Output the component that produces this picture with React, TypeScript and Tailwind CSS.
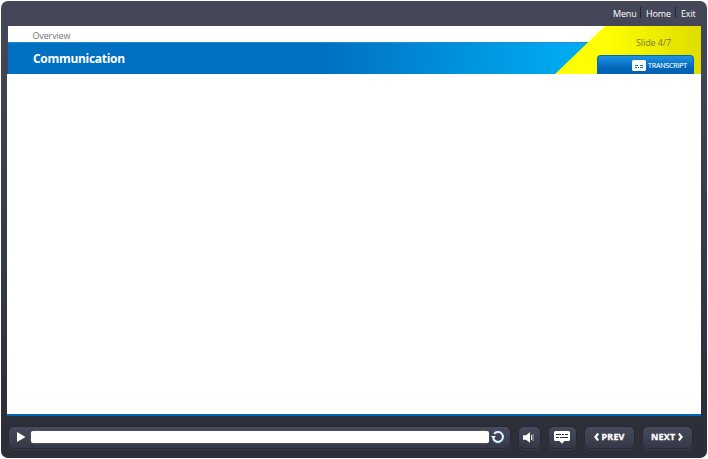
import React from 'react';

const pill =
  'flex items-center h-[21px] rounded-[5px] bg-linear-to-b from-[#484b5c] to-[#353846] ring-1 ring-[#272a34] shadow-[0_1px_1px_1px_#3d404c]';

function TopMenu() {
  return (
    <nav className="flex h-[25px] shrink-0 items-center justify-end pr-[11px] text-[9px] leading-[12px] tracking-[-0.15px] text-white">
      <a className="w-[22px] whitespace-nowrap">Menu</a>
      <span className="mx-[5px] mb-[3px] h-[11px] w-px bg-[#232630]" />
      <a className="w-[24px] whitespace-nowrap">Home</a>
      <span className="mx-[5px] mb-[3px] h-[11px] w-px bg-[#232630]" />
      <a className="w-[15px] whitespace-nowrap">Exit</a>
    </nav>
  );
}

function Header() {
  return (
    <header className="relative ml-[7px] mr-[6px] h-[48px] shrink-0 bg-white">
      <div className="h-[16px] pl-[24.5px] pt-[3px] text-[9px] leading-[13px] tracking-[-0.15px] text-[#777]">Overview</div>
      <div className="h-[32px] border-t border-[#268bd0] bg-linear-to-r from-[#0070c0] from-45% to-[#00aaf0] to-80% pl-[25px] text-[12px] font-bold leading-[31px] tracking-[-0.3px] text-white">
        Communication
      </div>
      <div className="absolute right-0 top-0 h-[48px] w-[146px] bg-linear-to-r from-[#ffff00] from-35% to-[#dfdc00] [clip-path:polygon(50px_0,100%_0,100%_100%,0_100%)]">
        <div className="pl-[81px] pt-[10px] text-[9px] leading-[13px] tracking-[-0.1px] text-[#777745]">Slide 4/7</div>
        <div className="ml-[42px] mt-[6px] flex h-[19px] w-[97px] items-center justify-end rounded-t-[4px] border border-b-0 border-[#006ba8] bg-linear-to-b from-[#1c92e8] to-[#0064b6] to-70% pr-[5px] pt-[2px] text-[7px] text-white">
          <svg width="14" height="11" viewBox="0 0 14 11" className="mr-[2px] mb-px">
            <rect width="14" height="11" rx="1.5" fill="white" />
            <path d="M3 5.5h3M8 5.5h3M3 7.5h2M6 7.5h1M8 7.5h3" stroke="#1672b8" strokeWidth="1" />
          </svg>
          <span className="w-[40px] whitespace-nowrap tracking-[-0.15px] [-webkit-text-stroke:0.1px_white]">TRANSCRIPT</span>
        </div>
      </div>
    </header>
  );
}

function Controls() {
  return (
    <footer className="flex h-[42px] shrink-0 items-center pl-[8px] text-[9px] font-bold text-white">
      <div className={`${pill} w-[501px] pl-[8px]`}>
        <svg width="9" height="10" viewBox="0 0 9 10">
          <path d="M0 0 8.5 5 0 10Z" fill="white" />
        </svg>
        <div className="ml-[4.5px] h-[12px] w-[458px] rounded-[2px] bg-white shadow-[0_0_0_1px_#4c4f5c]" />
        <svg width="14" height="14" viewBox="0 0 14 14" fill="none" className="ml-[2px]">
          <path d="M2 8.6A5.1 5.1 0 1 0 3 3.8" stroke="#3e83b8" strokeWidth="2.6" />
          <path d="M2.3 8.2A4.9 4.9 0 1 0 3.2 3.8" stroke="#f1f7fc" strokeWidth="1.7" />
          <path d="M0 6h4.8L2.4 9.2Z" fill="white" />
        </svg>
      </div>
      <div className={`${pill} ml-[9px] w-[21px] justify-center`}>
        <svg width="12" height="11" viewBox="0 0 12 11" className="mr-px">
          <path d="M0 3.2h3L7 .2v10.6L3 7.8H0Z" fill="white" />
          <path d="M8.5 3v5" stroke="#e0e0e5" strokeWidth="1" />
          <path d="M10 2v7" stroke="#9b9da8" strokeWidth="1.2" />
        </svg>
      </div>
      <div className={`${pill} ml-[9px] w-[27px] justify-center`}>
        <svg width="16" height="13" viewBox="0 0 16 13" className="mr-px">
          <path d="M1.5 0h13Q16 0 16 1.5v7Q16 10 14.5 10H10.5l-2.5 2.8L5.5 10H1.5Q0 10 0 8.5v-7Q0 0 1.5 0Z" fill="white" />
          <path d="M2 3.5h5M8 3.5h2M11 3.5h3M2 6.5h3M6 6.5h8" stroke="#303340" strokeWidth="1.2" />
        </svg>
      </div>
      <div className={`${pill} ml-[9px] w-[49px] pl-[9px]`}>
        <svg width="5" height="8" viewBox="0 0 5 8" fill="none">
          <path d="M4.2.6 1.4 4l2.8 3.4" stroke="white" strokeWidth="2.2" />
        </svg>
        <span className="ml-[2.5px] tracking-[0.15px] [-webkit-text-stroke:0.3px_white]">PREV</span>
      </div>
      <div className={`${pill} ml-[9px] w-[49px] pl-[8px]`}>
        <span className="w-[25px] whitespace-nowrap tracking-[0.2px] [-webkit-text-stroke:0.3px_white]">NEXT</span>
        <svg width="5" height="8" viewBox="0 0 5 8" fill="none" className="ml-[2px]">
          <path d="m.8.6 2.8 3.4-2.8 3.4" stroke="white" strokeWidth="2.2" />
        </svg>
      </div>
    </footer>
  );
}

export default function App() {
  return (
    <div className="h-[459px] w-[708px] overflow-hidden bg-white p-px font-['Open_Sans',sans-serif]">
      <div className="flex h-[457px] w-[706px] flex-col overflow-hidden rounded-[7px] bg-linear-to-b from-[#444757] from-5% via-[#383b49] via-50% to-[#2c2f39] to-95%">
        <TopMenu />
        <Header />
        <main className="ml-[6px] mr-[6px] h-[342px] shrink-0 border-b-2 border-[#0068b5] bg-white" />
        <Controls />
      </div>
    </div>
  );
}
